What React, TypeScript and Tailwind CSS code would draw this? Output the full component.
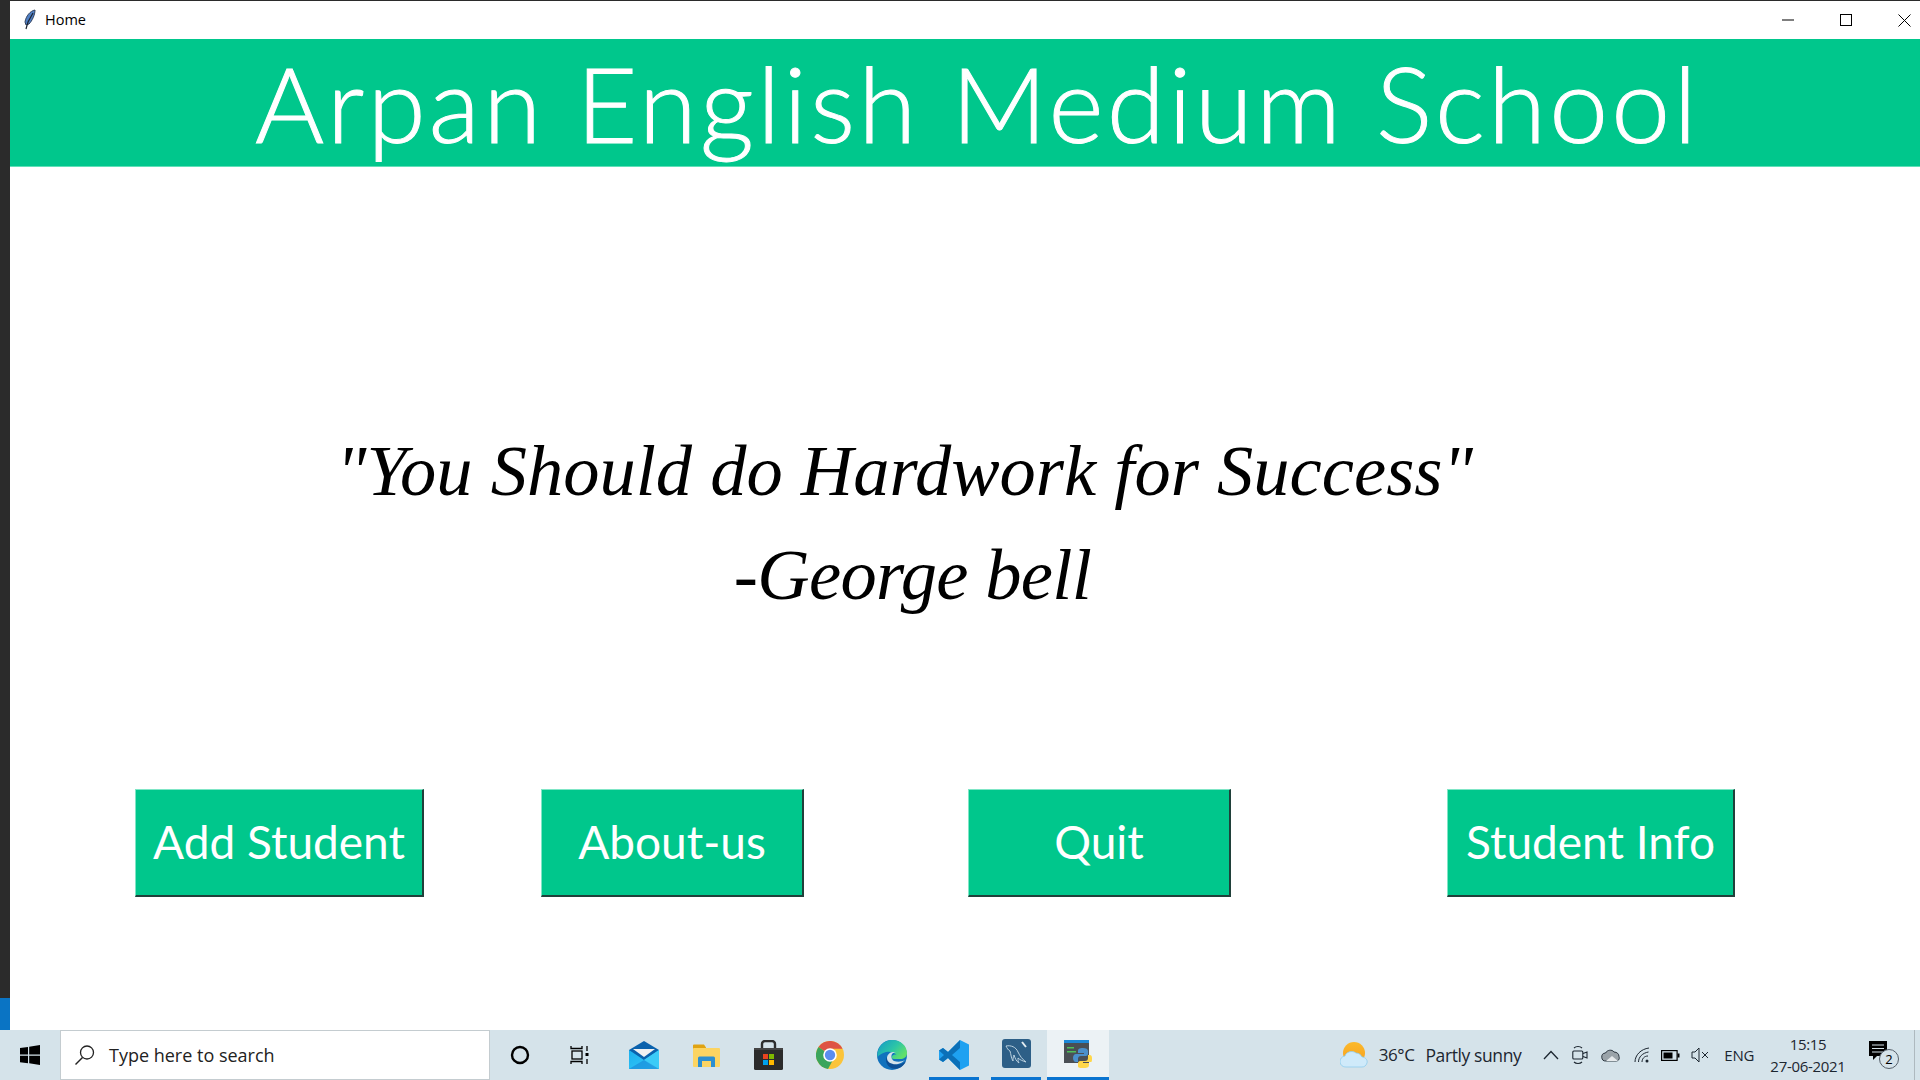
import React from "react";

const Btn = ({ label, w, ml }: { label: string; w: string; ml: string }) => (
  <div className={`${w} ${ml} h-[108px] flex items-center justify-center bg-[#00c78c] text-white text-[46px] leading-none border-t border-l border-t-[#7fe6c6] border-l-[#7fe6c6] border-r-2 border-b-2 border-r-[#20403a] border-b-[#20403a] font-['Lato',sans-serif] pb-[1px]`}>
    {label}
  </div>
);

const Feather = () => (
  <svg width="14" height="22" viewBox="0 0 14 22">
    <path d="M12 1C7 2 3 7 2 13l1 3 3-1c3-3 6-9 6-14z" fill="#4f7fc4" stroke="#33415c" strokeWidth="1" />
    <path d="M10 4 5 13 3 20" fill="none" stroke="#1c2430" strokeWidth="1.2" />
  </svg>
);

const TrayText = ({ children, cls }: { children: React.ReactNode; cls: string }) => (
  <span className={`${cls} text-[#1c2630] whitespace-nowrap font-['Open_Sans',sans-serif]`}>{children}</span>
);

export default function App() {
  return (
    <div className="w-[1920px] h-[1080px] overflow-hidden flex flex-col bg-white font-['Open_Sans',sans-serif]">
      <div className="h-[1px] bg-[#2b2b2b] shrink-0" />
      <div className="flex flex-1 min-h-0">
        <div className="w-[10px] shrink-0 flex flex-col bg-[#2b2b2b]">
          <div className="flex-1" />
          <div className="h-[32px] bg-[#0a74c4]" />
        </div>
        <div className="flex-1 flex flex-col min-w-0">
          <div className="h-[38px] flex items-center bg-white shrink-0">
            <div className="ml-[13px] w-[14px] flex items-center"><Feather /></div>
            <span className="ml-[8px] text-[14.5px] text-black font-['Open_Sans',sans-serif] pb-[1px]">Home</span>
            <div className="ml-auto flex items-center">
              <svg width="12" height="2" viewBox="0 0 12 2" className="mr-[46px]"><rect width="12" height="1" y="0.5" fill="#000" /></svg>
              <svg width="12" height="12" viewBox="0 0 12 12" className="mr-[46px]"><rect x="0.5" y="0.5" width="11" height="11" fill="none" stroke="#000" /></svg>
              <svg width="13" height="13" viewBox="0 0 13 13" className="mr-[9px]"><path d="M0.5 0.5l12 12M12.5 0.5l-12 12" stroke="#000" fill="none" /></svg>
            </div>
          </div>
          <div className="h-[128px] shrink-0 bg-[#00c78c] border-b border-b-[#5fe0b8] flex items-center pl-[245px]">
            <span className="text-white text-[105.5px] leading-none font-light [-webkit-text-stroke:1px_white] font-['Lato',sans-serif] whitespace-nowrap tracking-[3.2px] pt-[1px]">Arpan English Medium School</span>
          </div>
          <div className="flex-1 flex flex-col min-h-0">
            <div className="mt-[252px] w-[1789px] flex flex-col items-center text-black italic font-['Liberation_Serif',serif] text-[72.5px] leading-[104px]">
              <span>"You Should do Hardwork for Success"</span>
              <span className="ml-[16px] tracking-[-0.7px]">-George bell</span>
            </div>
            <div className="mt-[162px] flex">
              <Btn label="Add Student" w="w-[289px]" ml="ml-[125px]" />
              <Btn label="About-us" w="w-[263px]" ml="ml-[117px]" />
              <Btn label="Quit" w="w-[263px]" ml="ml-[164px]" />
              <Btn label="Student Info" w="w-[288px]" ml="ml-[216px]" />
            </div>
          </div>
        </div>
      </div>
      <div className="h-[50px] shrink-0 bg-[#d5e3ea] flex items-stretch">
        <div className="w-[60px] flex items-center justify-center">
          <svg width="20" height="20" viewBox="0 0 20 20"><path d="M0 3l8-1v7.5H0zM9.2 1.8 20 0v9.5H9.2zM0 10.7h8v7.5l-8-1zM9.2 10.7H20V20L9.2 18.3z" fill="#000" /></svg>
        </div>
        <div className="w-[430px] bg-white border border-[#c4ccd0] flex items-center">
          <svg width="22" height="22" viewBox="0 0 22 22" className="ml-[13px]"><circle cx="13" cy="8.5" r="6.5" fill="none" stroke="#222" strokeWidth="1.3" /><path d="M8.5 13.5 1.5 20.5" stroke="#222" strokeWidth="1.4" /></svg>
          <span className="ml-[13px] text-[18px] text-[#222] font-['Open_Sans',sans-serif]">Type here to search</span>
        </div>
        <div className="w-[60px] flex items-center justify-center">
          <svg width="20" height="20" viewBox="0 0 20 20"><circle cx="10" cy="10" r="8" fill="none" stroke="#000" strokeWidth="2.4" /></svg>
        </div>
        <div className="w-[60px] flex items-center justify-center">
          <svg width="20" height="20" viewBox="0 0 20 20" fill="none" stroke="#000" strokeWidth="1.3"><path d="M1 1v2.5h11V1M1 19v-2.5h11V19" /><rect x="2" y="6" width="10" height="8" /><path d="M17 1v5M17 14v5" /><rect x="15.5" y="8" width="3" height="3" fill="#000" stroke="none" /></svg>
        </div>
        <div className="w-[62px] ml-[3px] flex items-center justify-center">
          <svg width="30" height="28" viewBox="0 0 30 28">
            <defs><linearGradient id="mailG" x1="0" y1="0" x2="1" y2="1"><stop offset="0" stopColor="#1cb0ee" /><stop offset="1" stopColor="#35c8f8" /></linearGradient></defs>
            <path d="M0 9 15 0l15 9v19H0z" fill="#0a62ad" />
            <path d="M4 8h22l-11 8z" fill="#f0f1f2" />
            <path d="M0 9l15 10L30 9v19H0z" fill="url(#mailG)" />
            <path d="M15 19 30 9v19h-3z" fill="#3bcbf7" />
            <path d="M0 28 15 19l15 9z" fill="#1580d4" opacity="0.55" />
          </svg>
        </div>
        <div className="w-[62px] flex items-center justify-center">
          <svg width="27" height="23" viewBox="0 0 27 23"><path d="M0 1.500a1 1 0 0 1 1-1h10l2 3v3H0z" fill="#e0a312" /><rect y="4" width="27" height="19" rx="1" fill="#fcd462" /><path d="M5 23v-9a1.500 1.500 0 0 1 1.500-1.500h14A1.500 1.500 0 0 1 22 14v9h-4v-6H9v6z" fill="#2d8fd0" /></svg>
        </div>
        <div className="w-[62px] flex items-center justify-center">
          <svg width="29" height="30" viewBox="0 0 29 30"><path d="M8 8V4a3 3 0 0 1 3-3h7a3 3 0 0 1 3 3v4" fill="none" stroke="#2e2e2e" strokeWidth="2.4" /><rect y="8" width="29" height="22" rx="1.500" fill="#2b2b2b" /><rect y="8" width="29" height="2" fill="#444" /><rect x="9" y="14" width="5" height="5" fill="#e8431f" /><rect x="15" y="14" width="5" height="5" fill="#7fb900" /><rect x="9" y="20" width="5" height="5" fill="#00a2ed" /><rect x="15" y="20" width="5" height="5" fill="#ffb900" /></svg>
        </div>
        <div className="w-[62px] flex items-center justify-center">
          <svg width="28" height="28" viewBox="0 0 28 28"><circle cx="14" cy="14" r="14" fill="#fbc43a" /><path d="M14 14 2.500 6A14 14 0 0 1 26.500 7.700H14z" fill="#de5344" /><path d="M14 14 2.500 6A14 14 0 0 0 12 27.900L18 17z" fill="#3ba55c" /><circle cx="14" cy="14" r="6.800" fill="#fff" /><circle cx="14" cy="14" r="5.200" fill="#5b8def" /></svg>
        </div>
        <div className="w-[62px] flex items-center justify-center">
          <svg width="30" height="30" viewBox="0 0 30 30">
            <defs><linearGradient id="edgeG" x1="0" y1="0" x2="1" y2="0.6"><stop offset="0" stopColor="#1399c9" /><stop offset="0.6" stopColor="#2dc6a6" /><stop offset="1" stopColor="#62e06a" /></linearGradient></defs>
            <circle cx="15" cy="15" r="15" fill="#1172bd" />
            <path d="M0.500 13C2 5 8 0 15 0c9 0 15 6 15 13 0 4-3 6-7 6h-6c-2 0-3-1-2-3 1-1 3-2 5-1-3-3-7-4-11-3-4 1-7 3-8.500 5z" fill="url(#edgeG)" />
            <path d="M13 15c-4 1-5 5-3 9 2 4 7 6 12 4 3-1 6-4 7-7-3 3-7 4-11 3-4-1-6-5-5-9z" fill="#0c4f95" />
            <path d="M16 12c-3 0-6 3-6 6 0 5 6 7 11 6 3-1 5-2 7-4-3 2-8 2-11 1-3-2-3-5-2-7 1-1 2-2 4-2z" fill="#d5e3ea" />
          </svg>
        </div>
        <div className="w-[62px] flex flex-col">
          <div className="flex-1 flex items-center justify-center pt-[3px]">
            <svg width="30" height="30" viewBox="0 0 30 30"><path d="M21 0l9 4.500v21L21 30 9 18l-5 4-4-2.500v-9L4 8l5 4z" fill="#1ea1f1" /><path d="M21 0 9 12 4 8 0 10.500 5 15l-5 4.500L4 22l5-4 12 12V22l-8-7 8-7z" fill="#0b70b8" /></svg>
          </div>
          <div className="h-[3px] mx-[6px] bg-[#0a74d0]" />
        </div>
        <div className="w-[62px] flex flex-col">
          <div className="flex-1 flex items-center justify-center">
            <svg width="29" height="29" viewBox="0 0 29 29"><rect width="29" height="29" rx="3" fill="#2d5f87" /><path d="M4 7c5-1 10 1 12 6 2 4 4 7 8 10-3-1-6-2-8-4 0 2 0 3 1 5-3-2-4-5-5-8-1 2-1 4-1 6-2-3-2-7-3-10-2-1-3-3-4-5z" fill="none" stroke="#b9d0df" strokeWidth="1" /><path d="M20 3l4 5" stroke="#e3ecf1" strokeWidth="2" /></svg>
          </div>
          <div className="h-[3px] mx-[6px] bg-[#0a74d0]" />
        </div>
        <div className="w-[62px] bg-[#ecf2f5] flex flex-col">
          <div className="flex-1 flex items-center justify-center">
            <svg width="28" height="28" viewBox="0 0 28 28"><rect width="25" height="23" fill="#4a4f55" /><rect width="25" height="3" fill="#1d88d8" /><rect x="3" y="7" width="7" height="1.500" fill="#4fc05a" /><rect x="3" y="11" width="9" height="1.500" fill="#4fc05a" /><path d="M18 6c-4 0-5 1-5 3v2h6v1h-8c-2 0-3 2-3 4s1 4 3 4h2v-3c0-2 1-3 3-3h5c1 0 2-1 2-2V9c0-2-2-3-5-3z" fill="#4a8fcb" transform="translate(1 2)" /><path d="M20 28c4 0 5-1 5-3v-2h-6v-1h8c1 0 1-2 1-4s-1-3-2-3h-2v3c0 2-1 3-3 3h-5c-1 0-2 1-2 2v3c0 2 2 2 6 2z" fill="#ffd74a" /></svg>
          </div>
          <div className="h-[3px] bg-[#0a74d0]" />
        </div>
        <div className="flex-1 flex items-center justify-end">
          <svg width="28" height="26" viewBox="0 0 28 26" className="mr-[11px]">
            <defs><linearGradient id="sunG" x1="0" y1="0" x2="0" y2="1"><stop offset="0" stopColor="#fbb92b" /><stop offset="1" stopColor="#f79f1f" /></linearGradient></defs>
            <circle cx="14" cy="11" r="11" fill="url(#sunG)" />
            <path d="M6 25a5.500 5.500 0 0 1-1-11c1-4 7-6 11-3 3 0 5 2 6 4 3 0 6 3 5 6-1 3-3 4-5 4z" fill="#cfeafa" stroke="#8fcdee" strokeWidth="0.8" />
          </svg>
          <TrayText cls="text-[17px] mr-[11px] tracking-[-0.4px]">36°C</TrayText>
          <TrayText cls="text-[17.5px] mr-[22px] tracking-[-0.4px]">Partly sunny</TrayText>
          <svg width="16" height="10" viewBox="0 0 16 10" className="mr-[13px]"><path d="M1 9l7-7.500L15 9" fill="none" stroke="#1c2630" strokeWidth="1.300" /></svg>
          <svg width="16" height="20" viewBox="0 0 16 20" className="mr-[13px]" fill="none" stroke="#1c2630" strokeWidth="1.100"><path d="M2 3c2-2 6-2 8 0M2 17c2 2 6 2 8 0" /><rect x="0.800" y="6" width="10" height="8" rx="1" /><path d="M11 8.500l4-1.500v6l-4-1.500" /></svg>
          <svg width="20" height="13" viewBox="0 0 20 13" className="mr-[13px]"><path d="M5 12a4 4 0 0 1-.5-8C6 1 11 0 13 3c3 0 5 2 5 4.500 1 3-1 4.500-3 4.500z" fill="#9aa3a9" stroke="#1c2630" strokeWidth="0.900" /><path d="M5 12l6-5 6 5z" fill="#e6eaec" /></svg>
          <svg width="16" height="16" viewBox="0 0 16 16" className="mr-[11px]" fill="none" stroke="#1c2630" strokeWidth="1"><path d="M1 15C1 8 7 2 15 1M4.500 15c0-5 4-9 10-10M8 15c0-3 2-6 6-6" /><circle cx="13" cy="14" r="1.500" fill="#1c2630" stroke="none" /></svg>
          <svg width="19" height="11" viewBox="0 0 19 11" className="mr-[11px]"><rect x="0.600" y="0.600" width="15.500" height="9.800" fill="none" stroke="#000" strokeWidth="1.200" /><rect x="2.500" y="2.500" width="9" height="6" fill="#000" /><rect x="16.500" y="3.500" width="2" height="4" fill="#000" /></svg>
          <svg width="18" height="16" viewBox="0 0 18 16" className="mr-[15px]" fill="none" stroke="#1c2630" strokeWidth="1"><path d="M1 5v6h3l4 4V1L4 5zM11 5l6 6M17 5l-6 6" /></svg>
          <TrayText cls="text-[15px] mr-[16px] tracking-[-0.3px]">ENG</TrayText>
          <div className="flex flex-col items-center mr-[23px] w-[76px]">
            <TrayText cls="text-[15px] leading-[22px] tracking-[-0.3px]">15:15</TrayText>
            <TrayText cls="text-[15px] leading-[22px] tracking-[-0.3px]">27-06-2021</TrayText>
          </div>
          <div className="relative w-[30px] h-[32px] mr-[15px]">
            <svg width="18" height="20" viewBox="0 0 18 20" className="absolute left-0 top-[2px]"><path d="M0 0h18v15H8l-4 4v-4H0z" fill="#000" /><path d="M3 4h12M3 7.500h12M3 11h12" stroke="#d5e3ea" strokeWidth="1" /></svg>
            <div className="absolute left-[10px] top-[10px] w-[20px] h-[20px] rounded-full bg-[#d5e3ea] border border-[#55606a] flex items-center justify-center text-[13px] leading-none text-black font-['Open_Sans',sans-serif]">2</div>
          </div>
          <div className="w-[1px] h-full bg-[#aeb9bf] mr-[5px]" />
        </div>
      </div>
    </div>
  );
}
